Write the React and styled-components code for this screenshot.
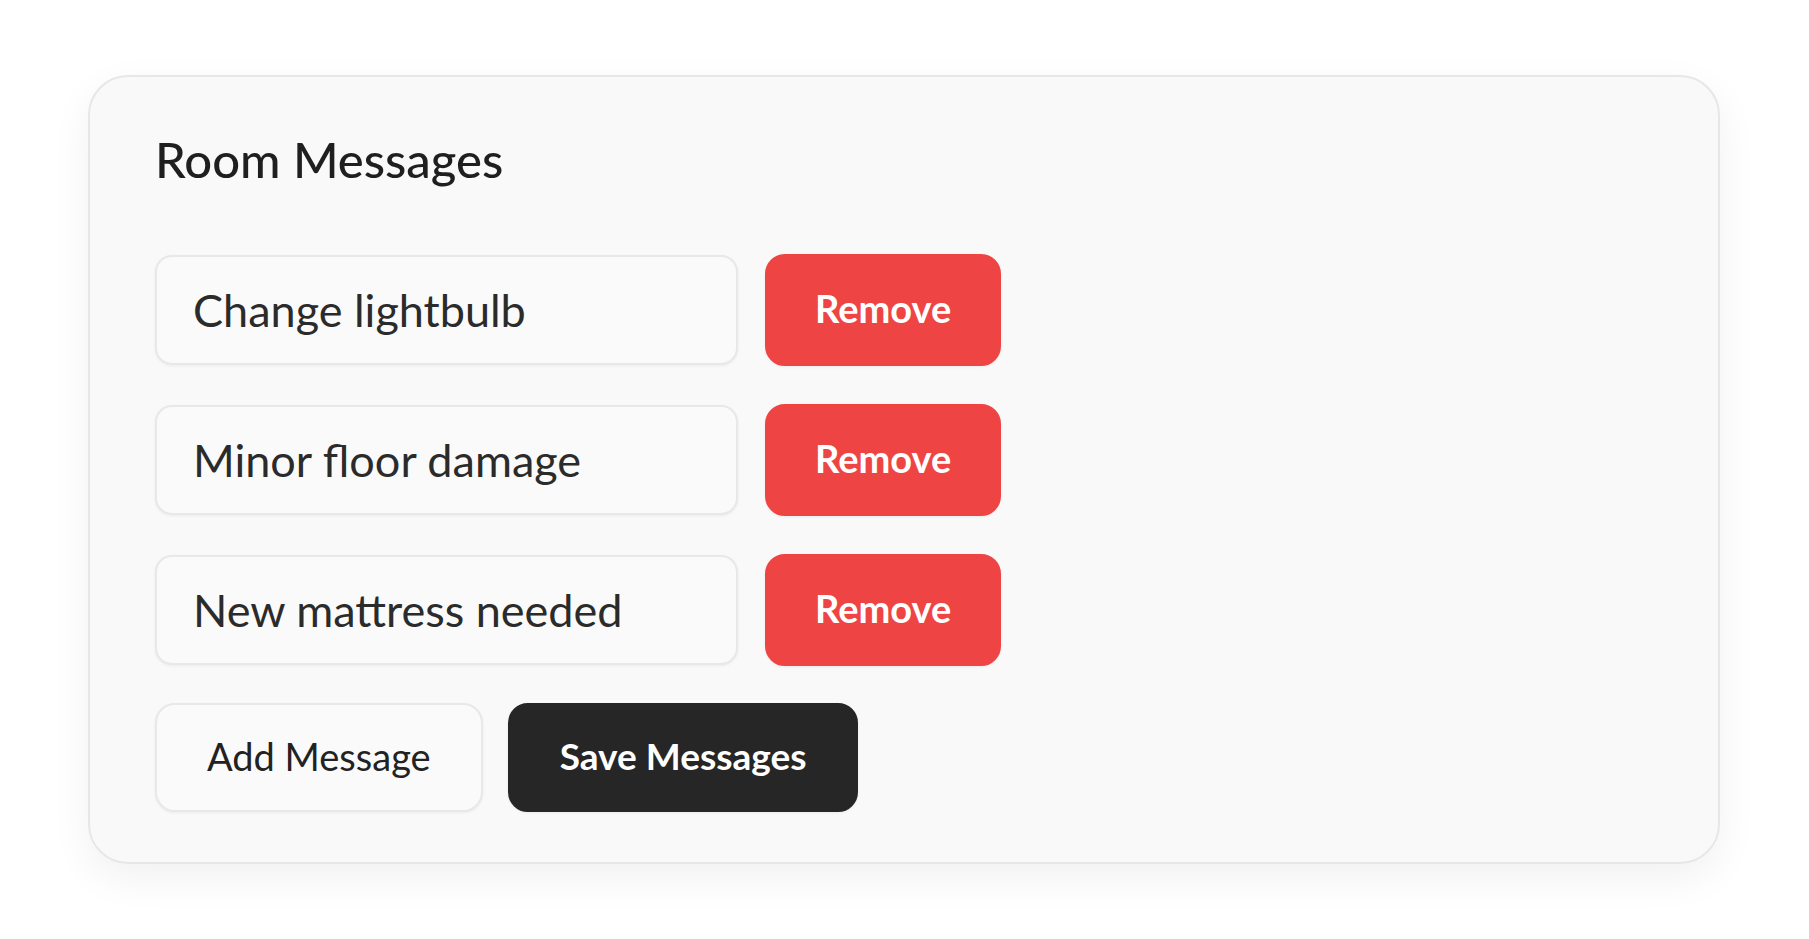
import React from 'react';
import styled, { createGlobalStyle } from 'styled-components';

const GlobalStyle = createGlobalStyle`
  html, body {
    margin: 0;
    padding: 0;
    background: #ffffff;
  }
  body {
    font-family: Lato, "Open Sans", sans-serif;
    color: #222;
  }
  * {
    box-sizing: border-box;
  }
`

const Page = styled.div`
  padding: 75px 89px 60px 88px;
`

const Card = styled.section`
  background: #f9f9f9;
  border: 2px solid #e7e7e7;
  border-radius: 40px;
  box-shadow: 0 14px 40px rgba(0, 0, 0, 0.06);
  padding: 53px 65px 50px 65px;
`

const Title = styled.h2`
  margin: 0 0 65px 0;
  font-size: 49px;
  line-height: 1.2;
  font-weight: 500;
  color: #1f1f1f;
`

const List = styled.div`
  display: flex;
  flex-direction: column;
  gap: 38px;
`

const Row = styled.div`
  display: flex;
  align-items: center;
  gap: 27px;
`

const MessageInput = styled.input`
  width: 583px;
  height: 110px;
  padding: 0 0 0 36px;
  background: #fafafa;
  border: 2px solid #e8e8e8;
  border-radius: 17px;
  box-shadow: 0 1px 3px rgba(0, 0, 0, 0.06);
  font-family: Lato, "Open Sans", sans-serif;
  font-size: 45px;
  color: #2b2b2b;
  outline: none;
`

const Button = styled.button`
  height: ${p => p.$tall ? 112 : 109}px;
  padding: 0 ${p => p.$pad || 50}px 3px ${p => p.$pad || 50}px;
  border-radius: 20px;
  font-family: Lato, "Open Sans", sans-serif;
  font-size: ${p => p.$size || 38}px;
  font-weight: ${p => p.$bold ? 700 : 400};
  cursor: pointer;
  border: 2px solid ${p => p.$border};
  background: ${p => p.$bg};
  color: ${p => p.$color};
  box-shadow: 0 1px 3px rgba(0, 0, 0, 0.06);
`

const Actions = styled.div`
  display: flex;
  gap: 25px;
  margin-top: 37px;
`

const messages = ['Change lightbulb', 'Minor floor damage', 'New mattress needed']

const App = () => (
  <>
    <GlobalStyle />
    <Page>
      <Card>
        <Title>Room Messages</Title>
        <List>
          {messages.map(m => (
            <Row key={m}>
              <MessageInput defaultValue={m} readOnly />
              <Button $tall $bold $pad={48} $bg="#ef4444" $border="#ef4444" $color="#ffffff">Remove</Button>
            </Row>
          ))}
        </List>
        <Actions>
          <Button $bg="#fafafa" $border="#e8e8e8" $color="#222">Add Message</Button>
          <Button $bold $size={37} $bg="#262626" $border="#262626" $color="#ffffff">Save Messages</Button>
        </Actions>
      </Card>
    </Page>
  </>
)

export default App
